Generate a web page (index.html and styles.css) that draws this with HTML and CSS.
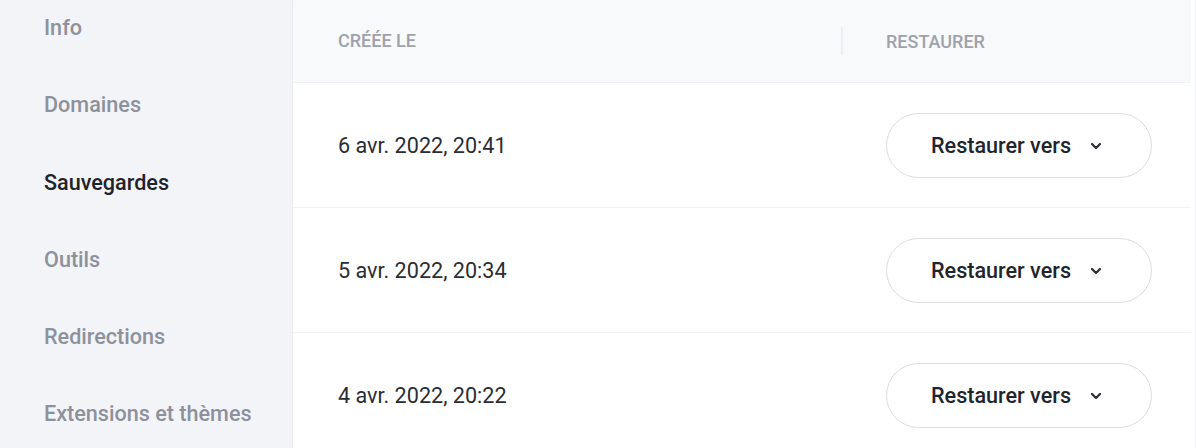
FILE: index.html
```html
<!DOCTYPE html>
<html lang="fr">
<head>
<meta charset="utf-8">
<title>Sauvegardes</title>
<link rel="stylesheet" href="styles.css">
</head>
<body>
<div class="app">
  <nav class="sidebar">
    <a class="nav-item">Info</a>
    <a class="nav-item">Domaines</a>
    <a class="nav-item active">Sauvegardes</a>
    <a class="nav-item">Outils</a>
    <a class="nav-item">Redirections</a>
    <a class="nav-item">Extensions et thèmes</a>
  </nav>
  <main class="main">
    <div class="table">
      <div class="thead">
        <div class="th col-date">CRÉÉE LE</div>
        <div class="th col-restore">RESTAURER</div>
      </div>
      <div class="row">
        <div class="cell col-date">6 avr. 2022, 20:41</div>
        <div class="cell col-restore">
          <button class="btn">Restaurer vers
            <svg class="chev" width="12" height="8" viewBox="0 0 12 8"><path d="M2 2 L6 6 L10 2" fill="none" stroke="#2a2d33" stroke-width="2.2" stroke-linecap="round" stroke-linejoin="round"/></svg>
          </button>
        </div>
      </div>
      <div class="row">
        <div class="cell col-date">5 avr. 2022, 20:34</div>
        <div class="cell col-restore">
          <button class="btn">Restaurer vers
            <svg class="chev" width="12" height="8" viewBox="0 0 12 8"><path d="M2 2 L6 6 L10 2" fill="none" stroke="#2a2d33" stroke-width="2.2" stroke-linecap="round" stroke-linejoin="round"/></svg>
          </button>
        </div>
      </div>
      <div class="row">
        <div class="cell col-date">4 avr. 2022, 20:22</div>
        <div class="cell col-restore">
          <button class="btn">Restaurer vers
            <svg class="chev" width="12" height="8" viewBox="0 0 12 8"><path d="M2 2 L6 6 L10 2" fill="none" stroke="#2a2d33" stroke-width="2.2" stroke-linecap="round" stroke-linejoin="round"/></svg>
          </button>
        </div>
      </div>
    </div>
  </main>
</div>
</body>
</html>
```
FILE: styles.css
```css
* { box-sizing: border-box; }
html, body { margin: 0; padding: 0; }
body {
  font-family: Roboto, "Liberation Sans", sans-serif;
  background: #ffffff;
  width: 1196px;
  height: 448px;
  overflow: hidden;
}
.app {
  display: flex;
  height: 448px;
}
.sidebar {
  width: 293px;
  flex: none;
  background: #f3f4f8;
  display: flex;
  flex-direction: column;
  padding: 15px 0 0 44px;
  box-shadow: inset -2px 0 2px -1px #e9eaef;
  overflow: hidden;
}
.nav-item {
  display: block;
  flex: none;
  height: 77.3px;
  line-height: 26px;
  font-size: 21.6px;
  font-weight: 500;
  color: #8d919c;
}
.nav-item.active { color: #1f232b; }
.main {
  flex: 1;
  padding-right: 4px;
  border-right: 1px solid #eeeff2;
}
.table {
  display: flex;
  flex-direction: column;
}
.thead {
  height: 83px;
  flex: none;
  background: #f8f9fb;
  display: flex;
  align-items: center;
  border-bottom: 1px solid #f0f1f4;
}
.th {
  font-size: 18px;
  font-weight: 500;
  color: #9ea2ab;
}
.col-date {
  width: 550px;
  flex: none;
  padding-left: 45px;
}
.thead .col-date {
  height: 28px;
  line-height: 28px;
  border-right: 2px solid #eceef1;
}
.col-restore {
  padding-left: 43px;
}
.row {
  height: 125px;
  flex: none;
  display: flex;
  align-items: center;
  border-bottom: 1px solid #f2f3f5;
}
.cell.col-date {
  font-size: 21.6px;
  color: #2a2d33;
}
.btn {
  width: 266px;
  height: 65px;
  border: 1px solid #dcdde1;
  border-radius: 33px;
  background: #ffffff;
  font-family: Roboto, "Liberation Sans", sans-serif;
  font-size: 21.6px;
  font-weight: 500;
  color: #22252c;
  display: flex;
  align-items: center;
  justify-content: flex-start;
  gap: 19px;
  padding: 0 0 0 44px;
}
.chev { display: block; margin-top: 1px; }
```
